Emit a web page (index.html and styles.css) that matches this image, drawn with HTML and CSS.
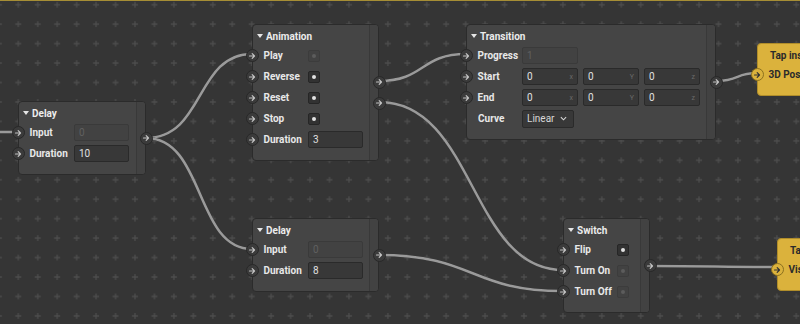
FILE: index.html
```html
<!DOCTYPE html>
<html>
<head>
<meta charset="utf-8">
<title>patch</title>
<link rel="stylesheet" href="styles.css">
</head>
<body>
<div class="canvas">
  <svg class="board" width="800" height="324" viewBox="0 0 800 324">
    <defs>
      <pattern id="grid" width="19.45" height="19.45" x="8.6" y="-5" patternUnits="userSpaceOnUse">
        <path d="M6.7 9.7h6M9.7 6.7v6" stroke="#4c4c4c" stroke-width="1.3"/>
      </pattern>
    </defs>
    <rect width="800" height="324" fill="url(#grid)"/>
    <g class="wires">
      <path d="M0 132H18"/>
      <path d="M146 138C205 138 195 54 252 54"/>
      <path d="M146 138C205 138 195 249 252 249"/>
      <path d="M379 81C425 81 420 54 466 54"/>
      <path d="M379 102C475 102 470 270 563 270"/>
      <path d="M379 255C475 255 470 291 563 291"/>
      <path d="M716 81C740 81 735 73 757 73"/>
      <path d="M650 266C710 266 720 267 777 267"/>
    </g>
  </svg>

  <div class="node delay-a">
    <div class="node-main">
      <div class="node-title"><span class="caret"></span>Delay</div>
      <div class="rows">
        <div class="port-label"><span class="port"><svg viewBox="0 0 8 8"><path d="M1.5 4H6.5M4.2 1.7 6.5 4 4.2 6.3"/></svg></span>Input</div>
        <div class="field off">0</div>
        <div class="port-label"><span class="port"><svg viewBox="0 0 8 8"><path d="M1.5 4H6.5M4.2 1.7 6.5 4 4.2 6.3"/></svg></span>Duration</div>
        <div class="field">10</div>
      </div>
    </div>
    <div class="node-out">
      <span class="port"><svg viewBox="0 0 8 8"><path d="M1.5 4H6.5M4.2 1.7 6.5 4 4.2 6.3"/></svg></span>
    </div>
  </div>

  <div class="node anim">
    <div class="node-main">
      <div class="node-title"><span class="caret"></span>Animation</div>
      <div class="rows">
        <div class="port-label"><span class="port"><svg viewBox="0 0 8 8"><path d="M1.5 4H6.5M4.2 1.7 6.5 4 4.2 6.3"/></svg></span>Play</div>
        <div><span class="check off"></span></div>
        <div class="port-label"><span class="port"><svg viewBox="0 0 8 8"><path d="M1.5 4H6.5M4.2 1.7 6.5 4 4.2 6.3"/></svg></span>Reverse</div>
        <div><span class="check"></span></div>
        <div class="port-label"><span class="port"><svg viewBox="0 0 8 8"><path d="M1.5 4H6.5M4.2 1.7 6.5 4 4.2 6.3"/></svg></span>Reset</div>
        <div><span class="check"></span></div>
        <div class="port-label"><span class="port"><svg viewBox="0 0 8 8"><path d="M1.5 4H6.5M4.2 1.7 6.5 4 4.2 6.3"/></svg></span>Stop</div>
        <div><span class="check"></span></div>
        <div class="port-label"><span class="port"><svg viewBox="0 0 8 8"><path d="M1.5 4H6.5M4.2 1.7 6.5 4 4.2 6.3"/></svg></span>Duration</div>
        <div class="field">3</div>
      </div>
    </div>
    <div class="node-out">
      <span class="port"><svg viewBox="0 0 8 8"><path d="M1.5 4H6.5M4.2 1.7 6.5 4 4.2 6.3"/></svg></span>
      <span class="port"><svg viewBox="0 0 8 8"><path d="M1.5 4H6.5M4.2 1.7 6.5 4 4.2 6.3"/></svg></span>
    </div>
  </div>

  <div class="node trans">
    <div class="node-main">
      <div class="node-title"><span class="caret"></span>Transition</div>
      <div class="rows">
        <div class="port-label"><span class="port"><svg viewBox="0 0 8 8"><path d="M1.5 4H6.5M4.2 1.7 6.5 4 4.2 6.3"/></svg></span>Progress</div>
        <div class="field off">1</div>
        <div class="port-label"><span class="port"><svg viewBox="0 0 8 8"><path d="M1.5 4H6.5M4.2 1.7 6.5 4 4.2 6.3"/></svg></span>Start</div>
        <div class="triple">
          <div class="field">0<i>x</i></div>
          <div class="field">0<i>Y</i></div>
          <div class="field">0<i>z</i></div>
        </div>
        <div class="port-label"><span class="port"><svg viewBox="0 0 8 8"><path d="M1.5 4H6.5M4.2 1.7 6.5 4 4.2 6.3"/></svg></span>End</div>
        <div class="triple">
          <div class="field">0<i>x</i></div>
          <div class="field">0<i>Y</i></div>
          <div class="field">0<i>z</i></div>
        </div>
        <div class="port-label bare">Curve</div>
        <div class="select">Linear<svg viewBox="0 0 8 5"><path d="M1 1 4 4 7 1"/></svg></div>
      </div>
    </div>
    <div class="node-out">
      <span class="port"><svg viewBox="0 0 8 8"><path d="M1.5 4H6.5M4.2 1.7 6.5 4 4.2 6.3"/></svg></span>
    </div>
  </div>

  <div class="node delay-b">
    <div class="node-main">
      <div class="node-title"><span class="caret"></span>Delay</div>
      <div class="rows">
        <div class="port-label"><span class="port"><svg viewBox="0 0 8 8"><path d="M1.5 4H6.5M4.2 1.7 6.5 4 4.2 6.3"/></svg></span>Input</div>
        <div class="field off">0</div>
        <div class="port-label"><span class="port"><svg viewBox="0 0 8 8"><path d="M1.5 4H6.5M4.2 1.7 6.5 4 4.2 6.3"/></svg></span>Duration</div>
        <div class="field">8</div>
      </div>
    </div>
    <div class="node-out">
      <span class="port"><svg viewBox="0 0 8 8"><path d="M1.5 4H6.5M4.2 1.7 6.5 4 4.2 6.3"/></svg></span>
    </div>
  </div>

  <div class="node switch">
    <div class="node-main">
      <div class="node-title"><span class="caret"></span>Switch</div>
      <div class="rows">
        <div class="port-label"><span class="port"><svg viewBox="0 0 8 8"><path d="M1.5 4H6.5M4.2 1.7 6.5 4 4.2 6.3"/></svg></span>Flip</div>
        <div><span class="check"></span></div>
        <div class="port-label"><span class="port"><svg viewBox="0 0 8 8"><path d="M1.5 4H6.5M4.2 1.7 6.5 4 4.2 6.3"/></svg></span>Turn On</div>
        <div><span class="check off"></span></div>
        <div class="port-label"><span class="port"><svg viewBox="0 0 8 8"><path d="M1.5 4H6.5M4.2 1.7 6.5 4 4.2 6.3"/></svg></span>Turn Off</div>
        <div><span class="check off"></span></div>
      </div>
    </div>
    <div class="node-out">
      <span class="port"><svg viewBox="0 0 8 8"><path d="M1.5 4H6.5M4.2 1.7 6.5 4 4.2 6.3"/></svg></span>
    </div>
  </div>

  <div class="node layer tap-a">
    <div class="node-main">
      <div class="node-title">Tap inside</div>
      <div class="rows">
        <div class="port-label"><span class="port"><svg viewBox="0 0 8 8"><path d="M1.5 4H6.5M4.2 1.7 6.5 4 4.2 6.3"/></svg></span>3D Position</div>
      </div>
    </div>
  </div>

  <div class="node layer tap-b">
    <div class="node-main">
      <div class="node-title">Tap</div>
      <div class="rows">
        <div class="port-label"><span class="port"><svg viewBox="0 0 8 8"><path d="M1.5 4H6.5M4.2 1.7 6.5 4 4.2 6.3"/></svg></span>Visible</div>
      </div>
    </div>
  </div>
</div>
</body>
</html>
```

FILE: styles.css
```css
* {
    box-sizing: border-box;
    margin: 0;
    padding: 0;
}

body {
    background: #353535;
    font-family: Roboto, "Liberation Sans", Arial, sans-serif;
    font-size: 10px;
    color: #e8e8e8;
}

.canvas {
    position: relative;
    width: 800px;
    height: 324px;
    overflow: hidden;
    background: #353535;
}

.canvas::after {
    content: "";
    position: absolute;
    left: 0;
    top: 0;
    right: 0;
    height: 1px;
    background: #a68e35;
}

.board {
    position: absolute;
    left: 0;
    top: 0;
}

.wires path {
    fill: none;
    stroke: #9a9a9a;
    stroke-width: 2.6;
    filter: drop-shadow(0 0 0.6px #1e1e1e);
}

/* nodes */
.node {
    position: absolute;
    display: flex;
    background: #454545;
    border: 1px solid #2b2b2b;
    border-radius: 4px;
}

.delay-a { left: 18px; top: 101px; width: 128px; }
.anim { left: 252px; top: 24px; width: 127px; }
.trans { left: 466px; top: 24px; width: 250px; }
.delay-b { left: 252px; top: 218px; width: 127px; }
.switch { left: 563px; top: 218px; width: 87px; }
.tap-a { left: 757px; top: 43px; width: 70px; }
.tap-b { left: 777px; top: 238px; width: 60px; }

.node-main {
    flex: 1;
    padding: 2px 0 10px;
}

.node-title {
    height: 18px;
    display: flex;
    align-items: center;
    padding-left: 4px;
    font-weight: bold;
    color: #ececec;
}

.caret {
    width: 0;
    height: 0;
    border-left: 3.5px solid transparent;
    border-right: 3.5px solid transparent;
    border-top: 4.5px solid #e6e6e6;
    margin-right: 3px;
}

.rows {
    display: grid;
    grid-template-columns: 55px auto;
    grid-auto-rows: 21px;
    align-items: center;
}

.switch .rows {
    grid-template-columns: 53px auto;
}

.port-label {
    display: flex;
    align-items: center;
    gap: 5px;
    margin-left: -7.5px;
    font-weight: bold;
    white-space: nowrap;
}

.port-label.bare {
    margin-left: 11px;
}

.port {
    width: 13px;
    height: 13px;
    border-radius: 50%;
    background: #3b3b3b;
    border: 1px solid #282828;
    display: flex;
    align-items: center;
    justify-content: center;
    color: #c4c4c4;
    flex: none;
}

.port svg {
    width: 8px;
    height: 8px;
    fill: none;
    stroke: currentColor;
    stroke-width: 1.2;
    stroke-linecap: round;
    stroke-linejoin: round;
}

.node-out {
    width: 9px;
    background: #424242;
    border-left: 1px solid #393939;
    border-radius: 0 3px 3px 0;
    display: flex;
    flex-direction: column;
    justify-content: center;
    align-items: flex-end;
    gap: 8px;
}

.node-out .port {
    margin-right: -7.5px;
}

/* inputs */
.field {
    width: 55px;
    height: 17px;
    display: flex;
    align-items: center;
    justify-content: space-between;
    padding: 0 4px;
    background: #383838;
    border: 1px solid #2a2a2a;
    border-radius: 2px;
    color: #e0e0e0;
}

.field.off {
    background: #424242;
    border-color: #3a3a3a;
    color: #606060;
}

.field i {
    font-style: normal;
    font-size: 7px;
    color: #6a6a6a;
}

.triple {
    display: flex;
    gap: 5px;
}

.triple .field {
    width: 56px;
}

.trans .field.off {
    width: 56px;
}

.select {
    width: 52px;
    height: 18px;
    display: flex;
    align-items: center;
    justify-content: space-between;
    padding: 0 6px 0 4px;
    background: #383838;
    border: 1px solid #2a2a2a;
    border-radius: 2px;
    color: #d8d8d8;
}

.select svg {
    width: 7px;
    height: 5px;
    fill: none;
    stroke: #d8d8d8;
    stroke-width: 1.2;
}

.check {
    display: flex;
    align-items: center;
    justify-content: center;
    width: 12px;
    height: 12px;
    background: #323232;
    border: 1px solid #262626;
    border-radius: 2px;
}

.check::after {
    content: "";
    width: 4px;
    height: 4px;
    border-radius: 50%;
    background: #e2e2e2;
}

.check.off {
    background: #424242;
    border-color: #3c3c3c;
}

.check.off::after {
    background: #5c5c5c;
}

/* layer nodes */
.layer {
    background: #dbb23c;
    border-color: #b08d2a;
    color: #2b2b2b;
}

.layer .node-title {
    padding-left: 12px;
    color: #2b2b2b;
}

.layer .port {
    background: #dbb23c;
    border-color: #8c711f;
    color: #333;
}
```
